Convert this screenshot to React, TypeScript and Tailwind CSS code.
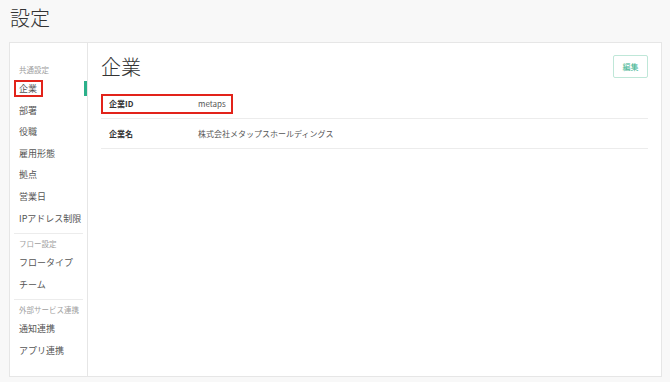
import React from "react";

const jp = { fontFamily: '"Noto Sans CJK JP", "Noto Sans", sans-serif' };

type Item = { label: string; active?: boolean };

const groups: { title: string; items: Item[] }[] = [
  {
    title: "共通設定",
    items: [
      { label: "企業", active: true },
      { label: "部署" },
      { label: "役職" },
      { label: "雇用形態" },
      { label: "拠点" },
      { label: "営業日" },
      { label: "IPアドレス制限" },
    ],
  },
  { title: "フロー設定", items: [{ label: "フロータイプ" }, { label: "チーム" }] },
  { title: "外部サービス連携", items: [{ label: "通知連携" }, { label: "アプリ連携" }] },
];

export default function App() {
  return (
    <div className="w-[670px] h-[382px] bg-[#f8f8f8] px-[9px] overflow-hidden" style={jp}>
      <div className="h-[42px] pt-[4px]">
        <h1 className="text-[20px] leading-[28px] font-light text-[#333] pl-[1px]">設定</h1>
      </div>
      <div className="flex h-[335px] w-[653px] border border-[#e6e6e6] bg-white">
        <aside className="relative w-[78px] border-r border-[#e6e6e6] px-[4px] pt-[19px]">
          <div className="absolute right-[0px] top-[38px] w-[3px] h-[15px] bg-[#2bb08a]" />
          {groups.map((g, gi) => (
            <div key={g.title} className={gi > 0 ? "mt-[4px] border-t border-[#ececec] pt-[2px]" : ""}>
              <div className="h-[16px] leading-[16px] pl-[5px] text-[7.5px] text-[#a0a0a0] whitespace-nowrap">
                {g.title}
              </div>
              {g.items.map((it) => (
                <div key={it.label} className="h-[21.6px] flex items-center whitespace-nowrap">
                  {it.active ? (
                    <span className="inline-block border-2 border-[#e2231a] pl-[3px] pr-[4px] text-[9px] leading-[13px] text-[#555]">
                      {it.label}
                    </span>
                  ) : (
                    <span className="pl-[5px] text-[9px] text-[#555]">{it.label}</span>
                  )}
                </div>
              ))}
            </div>
          ))}
        </aside>
        <main className="flex-1 px-[13px] pt-[12px]">
          <div className="flex items-center justify-between h-[23px]">
            <h2 className="text-[20px] leading-[28px] font-light text-[#333]">企業</h2>
            <button className="w-[35px] h-[23px] border border-[#bfe7d8] rounded-[2px] text-[8px] text-[#33b08c] flex items-center justify-center">
              編集
            </button>
          </div>
          <div className="mt-[11px]">
            <div className="h-[30px] flex items-center border-b border-[#ececec]">
              <div className="flex items-center h-[20px] w-[132px] border-2 border-[#e2231a] text-[8px]">
                <span className="w-[95px] pl-[6px] font-bold text-[#333]">企業ID</span>
                <span className="text-[#555]">metaps</span>
              </div>
            </div>
            <div className="h-[30px] flex items-center border-b border-[#ececec] text-[8px]">
              <span className="w-[97px] pl-[8px] font-bold text-[#333]">企業名</span>
              <span className="text-[#555]">株式会社メタップスホールディングス</span>
            </div>
          </div>
        </main>
      </div>
    </div>
  );
}
